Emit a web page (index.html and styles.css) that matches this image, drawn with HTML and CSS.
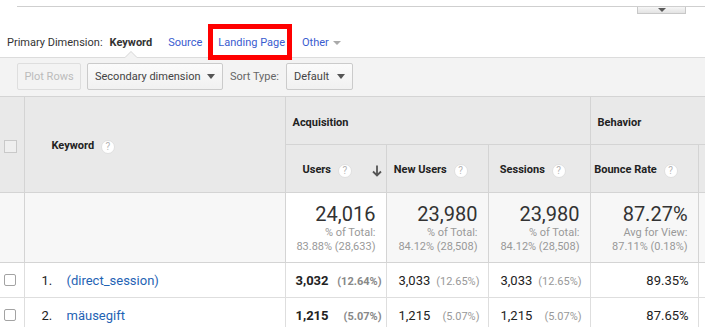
FILE: index.html
```html
<!DOCTYPE html>
<html>
<head>
    <title>Keyword Report</title>
    <link rel="stylesheet" href="styles.css">
</head>
<body>
    <div class="top-rule"></div>
    <div class="tab-row">
        <div class="tab"><span class="tab-caret"></span></div>
    </div>

    <div class="dims">
        <span class="dims-label">Primary Dimension:</span>
        <span class="dim dim-active">Keyword</span>
        <a class="dim" href="#">Source</a>
        <a class="dim dim-marked" href="#">Landing Page</a>
        <a class="dim dim-other" href="#">Other <span class="caret-light"></span></a>
    </div>

    <div class="toolbar">
        <button class="btn btn-plot" disabled>Plot Rows</button>
        <button class="btn btn-select btn-secondary">Secondary dimension <span class="caret"></span></button>
        <span class="sort-label">Sort Type:</span>
        <button class="btn btn-select btn-default">Default <span class="caret"></span></button>
    </div>

    <div class="table-wrap">
        <table class="report">
            <colgroup>
                <col class="c-check">
                <col class="c-key">
                <col class="c-users">
                <col class="c-new">
                <col class="c-sess">
                <col class="c-bounce">
                <col class="c-pages">
            </colgroup>
            <thead>
                <tr class="head-1">
                    <th rowspan="2" class="head-check"><span class="box-head"></span></th>
                    <th rowspan="2" class="head-key">Keyword <span class="help">?</span></th>
                    <th colspan="3" class="head-group">Acquisition</th>
                    <th colspan="2" class="head-group">Behavior</th>
                </tr>
                <tr class="head-2">
                    <th class="head-metric head-sorted">
                        Users <span class="help">?</span>
                        <svg class="sort-arrow" width="10" height="12" viewBox="0 0 10 12">
                            <path d="M5 0.5 V10.5 M1 6.5 L5 10.5 L9 6.5" fill="none" stroke="#555" stroke-width="1.8"/>
                        </svg>
                    </th>
                    <th class="head-metric">New Users <span class="help">?</span></th>
                    <th class="head-metric head-sess">Sessions <span class="help">?</span></th>
                    <th class="head-metric">Bounce Rate <span class="help">?</span></th>
                    <th class="head-metric"></th>
                </tr>
            </thead>
            <tbody>
                <tr class="totals">
                    <td></td>
                    <td></td>
                    <td class="total total-sorted">
                        <div class="total-big">24,016</div>
                        <div class="total-sub">% of Total:</div>
                        <div class="total-sub">83.88% (28,633)</div>
                    </td>
                    <td class="total">
                        <div class="total-big">23,980</div>
                        <div class="total-sub">% of Total:</div>
                        <div class="total-sub">84.12% (28,508)</div>
                    </td>
                    <td class="total">
                        <div class="total-big">23,980</div>
                        <div class="total-sub">% of Total:</div>
                        <div class="total-sub">84.12% (28,508)</div>
                    </td>
                    <td class="total">
                        <div class="total-big">87.27%</div>
                        <div class="total-sub">Avg for View:</div>
                        <div class="total-sub">87.11% (0.18%)</div>
                    </td>
                    <td></td>
                </tr>
                <tr class="row">
                    <td class="cell-check"><span class="box"></span></td>
                    <td class="cell-key"><span class="idx">1.</span><a href="#">(direct_session)</a></td>
                    <td class="cell-num cell-sorted"><div class="pair"><span>3,032</span><span class="pct">(12.64%)</span></div></td>
                    <td class="cell-num"><div class="pair"><span>3,033</span><span class="pct">(12.65%)</span></div></td>
                    <td class="cell-num"><div class="pair"><span>3,033</span><span class="pct">(12.65%)</span></div></td>
                    <td class="cell-right">89.35%</td>
                    <td></td>
                </tr>
                <tr class="row">
                    <td class="cell-check"><span class="box"></span></td>
                    <td class="cell-key"><span class="idx">2.</span><a href="#">mäusegift</a></td>
                    <td class="cell-num cell-sorted"><div class="pair"><span>1,215</span><span class="pct">(5.07%)</span></div></td>
                    <td class="cell-num"><div class="pair"><span>1,215</span><span class="pct">(5.07%)</span></div></td>
                    <td class="cell-num"><div class="pair"><span>1,215</span><span class="pct">(5.07%)</span></div></td>
                    <td class="cell-right">87.65%</td>
                    <td></td>
                </tr>
            </tbody>
        </table>
    </div>
</body>
</html>
```

FILE: styles.css
```css
body {
    margin: 0;
    width: 705px;
    overflow: hidden;
    font-family: Roboto, "Noto Sans", Arial, sans-serif;
    color: #222;
    background: #fff;
}

a {
    text-decoration: none;
}

/* collapsed chart strip at the top */
.top-rule {
    margin-left: 17px;
    height: 6px;
    border-bottom: 1px solid #cfcfcf;
}

.tab-row {
    display: flex;
    justify-content: flex-end;
    padding-right: 19px;
}

.tab {
    width: 49px;
    height: 7px;
    box-sizing: border-box;
    border: 1px solid #c8c8c8;
    border-top: 0;
    background: linear-gradient(#f6f6f6, #e3e3e3);
    display: flex;
    justify-content: center;
    align-items: center;
}

.tab-caret {
    border-left: 4px solid transparent;
    border-right: 4px solid transparent;
    border-top: 4px solid #5a5a5a;
}

/* primary dimension switcher */
.dims {
    display: flex;
    align-items: center;
    padding: 21px 0 6px 7px;
    font-size: 11px;
    line-height: 16px;
    color: #333;
}

.dim {
    margin-left: 16px;
    color: #3a5ccf;
    position: relative;
}

.dim-active {
    margin-left: 7px;
    font-weight: bold;
    color: #333;
}

/* little notch under the selected dimension */
.dim-active::before,
.dim-active::after {
    content: "";
    position: absolute;
    left: 50%;
    margin-left: -6px;
    border-left: 6px solid transparent;
    border-right: 6px solid transparent;
    border-bottom: 6px solid #d6d6d6;
}

.dim-active::before {
    top: 16px;
}

.dim-active::after {
    top: 17px;
    border-bottom-color: #f3f3f3;
}

/* red highlight box round "Landing Page" */
.dim-marked::after {
    content: "";
    position: absolute;
    top: -11px;
    bottom: -9px;
    left: -10px;
    right: -7px;
    border: 5px solid #f00;
    z-index: 2;
}

.dim-other {
    margin-left: 17px;
    display: flex;
    align-items: center;
}

.caret-light {
    margin-left: 4px;
    border-left: 4px solid transparent;
    border-right: 4px solid transparent;
    border-top: 4px solid #aaa;
}

/* toolbar */
.toolbar {
    display: flex;
    align-items: center;
    gap: 6px;
    padding: 5px 0 6px 17px;
    background: #f3f3f3;
    border-top: 1px solid #dcdcdc;
}

.btn {
    height: 27px;
    box-sizing: border-box;
    border: 1px solid #cbcbcb;
    border-radius: 2px;
    background: linear-gradient(#fbfbfb, #f1f1f1);
    font-family: Roboto, "Noto Sans", Arial, sans-serif;
    font-size: 11px;
    color: #444;
    padding: 0 7px;
    display: flex;
    align-items: center;
    white-space: nowrap;
}

.btn-plot {
    width: 64px;
    justify-content: center;
    color: #bbb;
    border-color: #dedede;
    background: #f3f3f3;
}

.btn-select {
    justify-content: space-between;
}

.btn-secondary {
    width: 136px;
}

.btn-default {
    width: 67px;
}

.caret {
    border-left: 4px solid transparent;
    border-right: 4px solid transparent;
    border-top: 5px solid #555;
}

.sort-label {
    font-size: 11px;
    color: #666;
    margin: 0 1px;
}

/* report table */
.table-wrap {
    width: 705px;
    overflow: hidden;
}

.report {
    width: 805px;
    table-layout: fixed;
    border-collapse: collapse;
    border-top: 1px solid #cdcdcd;
}

.c-check { width: 24px; }
.c-key { width: 261px; }
.c-users { width: 101px; }
.c-new { width: 102px; }
.c-sess { width: 102px; }
.c-bounce { width: 108px; }
.c-pages { width: 107px; }

.report th,
.report td {
    border: 1px solid #d4d4d4;
    padding: 0;
}

.report th:first-child,
.report td:first-child {
    border-left: 0;
}

.report th {
    background: #e9e9e9;
    font-size: 11px;
    font-weight: bold;
    color: #222;
    white-space: nowrap;
    padding-top: 4px;
}

.head-1 {
    height: 48px;
}

.head-2 {
    height: 48px;
}

.head-check {
    text-align: left;
    padding-left: 4px !important;
}

.box-head {
    display: block;
    width: 13px;
    height: 13px;
    box-sizing: border-box;
    border: 1px solid #c9c9c9;
    background: #efefef;
}

.head-key {
    text-align: left;
    padding-left: 27px !important;
}

.head-group {
    text-align: left;
    padding-left: 7px !important;
}

.head-metric {
    text-align: right;
    padding-right: 20px !important;
}

.head-sess {
    padding-right: 24px !important;
}

.head-sorted {
    padding-right: 4px !important;
}

.help {
    display: inline-block;
    width: 14px;
    height: 14px;
    box-sizing: border-box;
    margin-left: 4px;
    border: 1px solid #e0e0e0;
    border-radius: 50%;
    background: #fff;
    color: #b5b5b5;
    font-size: 10px;
    font-weight: normal;
    line-height: 12px;
    text-align: center;
    vertical-align: middle;
}

.sort-arrow {
    margin-left: 17px;
    vertical-align: middle;
}

/* totals row */
.totals {
    height: 70px;
}

.totals td {
    background: #f7f7f7;
}

.report td.total-sorted {
    background: #fff;
}

.total {
    text-align: right;
    padding-right: 10px !important;
}

.total-big {
    font-size: 20px;
    line-height: 24px;
    color: #333;
}

.total-sub {
    font-size: 11px;
    line-height: 14px;
    color: #999;
}

/* data rows */
.row {
    height: 35px;
    font-size: 13px;
}

.row td {
    border-color: #dedede;
}

.cell-check {
    padding-left: 4px !important;
}

.box {
    display: block;
    width: 12px;
    height: 12px;
    box-sizing: border-box;
    border: 1px solid #a3a3a3;
    border-radius: 2px;
    background: #fff;
}

.cell-key {
    padding-left: 17px !important;
}

.idx {
    display: inline-block;
    width: 25px;
    color: #222;
}

.cell-key a {
    color: #1f63b4;
}

.cell-num {
    padding: 0 8px 0 12px !important;
}

.pair {
    display: flex;
    justify-content: space-between;
    align-items: baseline;
    white-space: nowrap;
}

.pct {
    font-size: 11px;
    color: #999;
}

.cell-sorted {
    padding: 0 4px 0 10px !important;
    font-weight: bold;
}

.cell-sorted .pct {
    color: #888;
}

.cell-right {
    text-align: right;
    padding-right: 9px !important;
}
```
